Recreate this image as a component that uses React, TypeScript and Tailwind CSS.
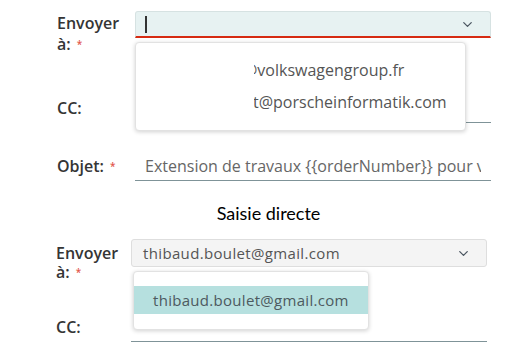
import { ChevronDown } from 'lucide-react';

const ui = { fontFamily: '"Open Sans", "Noto Sans", sans-serif' };

function Req() {
  return <span className="ml-[6px] inline-block align-[2px] text-[10px] leading-none text-[#e2574c]">*</span>;
}

export default function App() {
  return (
    <div className="relative w-[527px] h-[361px] overflow-hidden bg-white text-[#353535]" style={ui}>
      {/* First form */}
      <div className="relative pl-[57px] pr-[36px]">
        <div className="flex items-start pt-[11px]">
          <div className="w-[78px] pt-[2px] text-[16px] font-semibold leading-[21px]">
            Envoyer
            <br />
            à:<Req />
          </div>
          <div className="flex h-[27px] flex-1 items-center justify-between rounded-t-[3px] border border-b-2 border-[#d6e2e2] border-b-[#d62b12] bg-[#e7f2f2] pl-[9px] pr-[15px]">
            <span className="h-[17px] w-[2px] bg-[#333]" />
            <ChevronDown className="h-[15px] w-[15px] text-[#4a5560]" strokeWidth={2} />
          </div>
        </div>

        <div className="mt-[38px] flex h-[30px] items-center">
          <div className="w-[78px] text-[16px] font-semibold">CC:</div>
          <div className="h-[30px] flex-1 border-b border-[#7f9398]" />
        </div>

        <div className="mt-[28px] flex h-[30px] items-center">
          <div className="w-[78px] text-[16px] font-semibold">
            Objet:<Req />
          </div>
          <div className="flex h-[30px] min-w-0 flex-1 items-center border-b border-[#7f9398] pl-[10px] pr-[10px] text-[16px] text-[#666]">
            <span className="overflow-hidden whitespace-nowrap">Extension de travaux {'{{orderNumber}}'} pour vos véhicules</span>
          </div>
        </div>

        {/* open dropdown */}
        <div className="absolute left-[135px] top-[42px] h-[89px] w-[331px] rounded-[4px] border border-[#e2e2e2] bg-white text-[16px] text-[#555] shadow-[0_1px_4px_rgba(0,0,0,0.18)]">
          <div className="ml-[118px] mt-[15px] overflow-hidden whitespace-nowrap">
            <span className="-ml-[11px]">@volkswagengroup.fr</span>
          </div>
          <div className="ml-[118px] mt-[8px] overflow-hidden whitespace-nowrap">
            <span className="-ml-[1px]">t@porscheinformatik.com</span>
          </div>
        </div>
      </div>

      <div className="ml-[10px] mt-[19px] text-center text-[18px] leading-[26px] text-black" style={{ fontFamily: 'Lato, "Liberation Sans", sans-serif' }}>
        Saisie directe
      </div>

      {/* Second form */}
      <div className="relative pl-[56px] pr-[40px]">
        <div className="mt-[13px] flex items-start">
          <div className="w-[75px] pt-[5px] text-[16px] font-semibold leading-[19px]">
            Envoyer
            <br />
            à:<Req />
          </div>
          <div className="flex h-[28px] flex-1 items-center justify-between rounded-[3px] border border-[#dedede] bg-[#f4f4f4] pl-[11px] pr-[15px] text-[15px] tracking-[0.35px] text-[#555]">
            <span>thibaud.boulet@gmail.com</span>
            <ChevronDown className="h-[15px] w-[15px] text-[#4a5560]" strokeWidth={2} />
          </div>
        </div>

        <div className="mt-[30px] flex h-[30px] items-center">
          <div className="w-[75px] text-[16px] font-semibold">CC:</div>
          <div className="h-[30px] flex-1 border-b border-[#7f9398]" />
        </div>

        <div className="absolute left-[133px] top-[32px] h-[59px] w-[236px] rounded-[4px] border border-[#e2e2e2] bg-white shadow-[0_1px_4px_rgba(0,0,0,0.18)]">
          <div className="mt-[14px] flex h-[28px] items-center bg-[#b6e0df] pl-[19px] text-[15px] tracking-[0.3px] text-[#4d5a60]">
            thibaud.boulet@gmail.com
          </div>
        </div>
      </div>
    </div>
  );
}
